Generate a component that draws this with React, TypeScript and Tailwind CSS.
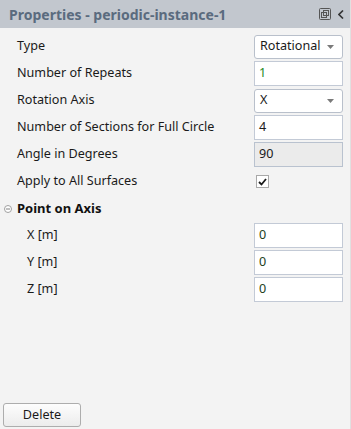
import React from "react";

const font = { fontFamily: '"Noto Sans", "Open Sans", sans-serif' };

function Label({ children, indent = false }: { children: React.ReactNode; indent?: boolean }) {
  return (
    <div className={`flex-1 text-[12.6px] text-[#1a1a1a] ${indent ? "pl-[27px]" : "pl-[17px]"}`}>{children}</div>
  );
}

function TextBox({ value, color = "#1a1a1a", disabled = false }: { value: string; color?: string; disabled?: boolean }) {
  return (
    <div
      className={`w-[89px] h-[25px] border flex items-center pl-[4px] text-[12.6px] ${
        disabled ? "bg-[#ebebeb] border-[#b9c2cf]" : "bg-white border-[#c3cad6]"
      }`}
      style={{ color }}
    >
      {value}
    </div>
  );
}

function Select({ value }: { value: string }) {
  return (
    <div className="w-[89px] h-[24px] border border-[#b9c0cb] rounded-[3px] bg-white flex items-center pl-[5px] pr-[8px] text-[12.6px] text-[#1a1a1a]">
      <span className="flex-1">{value}</span>
      <svg width="7" height="4" viewBox="0 0 7 4">
        <path d="M0 0 L7 0 L3.5 4 Z" fill="#7a7a7a" />
      </svg>
    </div>
  );
}

function Row({ children }: { children: React.ReactNode }) {
  return <div className="h-[27px] flex items-center pr-[7px]">{children}</div>;
}

export default function App() {
  return (
    <div className="w-[351px] h-[429px] bg-[#f3f3f3] flex flex-col border-r border-[#e0e0e0]" style={font}>
      <div className="h-[28px] bg-[#c2c7ce] flex items-center pl-[9px] pr-[6px] shrink-0">
        <div className="flex-1 text-[14px] font-bold text-[#5a6b7e]">Properties - periodic-instance-1</div>
        <svg width="12" height="12" viewBox="0 0 12 12" className="mr-[7px]">
          <rect x="0.5" y="0.5" width="11" height="11" rx="1" fill="none" stroke="#555" strokeWidth="1" />
          <rect x="4.5" y="2.5" width="5" height="5" fill="none" stroke="#555" strokeWidth="1" />
          <rect x="2.5" y="4.5" width="5" height="5" fill="none" stroke="#555" strokeWidth="1" />
        </svg>
        <svg width="6" height="9" viewBox="0 0 6 9">
          <path d="M5 0.5 L1 4.5 L5 8.5" fill="none" stroke="#333" strokeWidth="1.6" />
        </svg>
      </div>
      <div className="pt-[5px] flex flex-col flex-1">
        <Row>
          <Label>Type</Label>
          <Select value="Rotational" />
        </Row>
        <Row>
          <Label>Number of Repeats</Label>
          <TextBox value="1" color="#1d8a1d" />
        </Row>
        <Row>
          <Label>Rotation Axis</Label>
          <Select value="X" />
        </Row>
        <Row>
          <Label>Number of Sections for Full Circle</Label>
          <TextBox value="4" />
        </Row>
        <Row>
          <Label>Angle in Degrees</Label>
          <TextBox value="90" disabled />
        </Row>
        <Row>
          <Label>Apply to All Surfaces</Label>
          <div className="w-[89px] h-[25px] flex items-center pl-[2px]">
            <div className="w-[13px] h-[13px] border border-[#a8a8a8] bg-white flex items-center justify-center">
              <svg width="9" height="8" viewBox="0 0 9 8">
                <path d="M1 4 L3.5 6.5 L8 1" fill="none" stroke="#1a1a1a" strokeWidth="1.8" />
              </svg>
            </div>
          </div>
        </Row>
        <Row>
          <div className="flex items-center pl-[4px]">
            <svg width="8" height="8" viewBox="0 0 8 8" className="mr-[5px]">
              <circle cx="4" cy="4" r="3.5" fill="#fff" stroke="#a0a0a0" strokeWidth="1" />
              <path d="M2 4 H6" stroke="#808080" strokeWidth="1" />
            </svg>
            <span className="text-[13px] font-bold text-[#111]">Point on Axis</span>
          </div>
        </Row>
        <Row>
          <Label indent>X [m]</Label>
          <TextBox value="0" color="#23401d" />
        </Row>
        <Row>
          <Label indent>Y [m]</Label>
          <TextBox value="0" color="#23401d" />
        </Row>
        <Row>
          <Label indent>Z [m]</Label>
          <TextBox value="0" color="#23401d" />
        </Row>
        <div className="flex-1" />
        <div className="pl-[3px] pb-[2px]">
          <button className="w-[78px] h-[24px] border border-[#adadad] rounded-[3px] bg-gradient-to-b from-[#fdfdfd] to-[#ececec] text-[12.6px] text-[#1a1a1a] flex items-center justify-center">
            Delete
          </button>
        </div>
      </div>
    </div>
  );
}
